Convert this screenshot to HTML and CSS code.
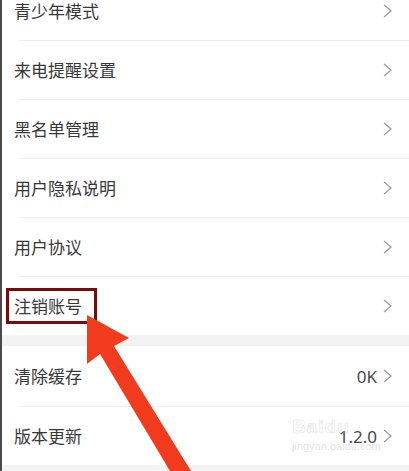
FILE: index.html
```html
<!DOCTYPE html>
<html lang="zh">
<head>
<meta charset="utf-8">
<link rel="stylesheet" href="styles.css">
</head>
<body>
<div class="screen">
  <div class="group first">
    <div class="item"><span class="label">青少年模式</span><span class="right"><svg class="chev" viewBox="0 0 9 14"><polyline points="1,1 8,7 1,13"/></svg></span></div>
    <div class="sep"></div>
    <div class="item"><span class="label">来电提醒设置</span><span class="right"><svg class="chev" viewBox="0 0 9 14"><polyline points="1,1 8,7 1,13"/></svg></span></div>
    <div class="sep"></div>
    <div class="item"><span class="label">黑名单管理</span><span class="right"><svg class="chev" viewBox="0 0 9 14"><polyline points="1,1 8,7 1,13"/></svg></span></div>
    <div class="sep"></div>
    <div class="item"><span class="label">用户隐私说明</span><span class="right"><svg class="chev" viewBox="0 0 9 14"><polyline points="1,1 8,7 1,13"/></svg></span></div>
    <div class="sep"></div>
    <div class="item"><span class="label">用户协议</span><span class="right"><svg class="chev" viewBox="0 0 9 14"><polyline points="1,1 8,7 1,13"/></svg></span></div>
    <div class="sep"></div>
    <div class="item"><span class="label boxed">注销账号</span><span class="right"><svg class="chev" viewBox="0 0 9 14"><polyline points="1,1 8,7 1,13"/></svg></span></div>
  </div>
  <div class="gap"></div>
  <div class="group">
    <div class="item tall"><span class="label">清除缓存</span><span class="right"><span class="value">0K</span><svg class="chev" viewBox="0 0 9 14"><polyline points="1,1 8,7 1,13"/></svg></span></div>
    <div class="sep"></div>
    <div class="item"><span class="label">版本更新</span><span class="right"><span class="value">1.2.0</span><svg class="chev" viewBox="0 0 9 14"><polyline points="1,1 8,7 1,13"/></svg></span></div>
  </div>
  <div class="gap bottom"></div>

  <div class="watermark">
    <span class="wm-logo">Bai<span class="wm-paw">du</span></span>
    <span class="wm-url">jingyan.baidu.com</span>
  </div>

  <svg class="arrow" viewBox="0 0 409 471" preserveAspectRatio="none">
    <polygon points="87,315 129,338 114,346 191,471 170,471 100,354 87,364"/>
  </svg>
</div>
</body>
</html>
```
FILE: styles.css
```css
html, body {
  margin: 0;
  padding: 0;
  background: #ffffff;
}

body {
  font-family: "Noto Sans CJK SC", "Noto Sans", sans-serif;
  color: #333333;
  width: 409px;
  height: 471px;
  overflow: hidden;
}

.screen {
  position: relative;
  width: 407px;
  height: 471px;
  overflow: hidden;
  border-left: 2px solid #4a4a4a;
  background: #ffffff;
}

.group.first {
  margin-top: -18px;
}

.item {
  height: 58px;
  display: flex;
  align-items: center;
  justify-content: space-between;
  padding: 0 17px 0 12px;
}

.item.tall {
  height: 60px;
}

.label {
  font-size: 17px;
  line-height: 24px;
  color: #383838;
}

.label.boxed {
  outline: 3px solid #7d0a0a;
  outline-offset: 0;
  padding: 3px 12px 3px 5px;
  margin-left: -5px;
}

.right {
  display: flex;
  align-items: center;
  gap: 6px;
}

.value {
  font-size: 17px;
  color: #484848;
  font-family: "Noto Sans", "Noto Sans CJK SC", sans-serif;
}

.chev {
  width: 9px;
  height: 14px;
  fill: none;
  stroke: #9a9a9a;
  stroke-width: 1.3;
}

.sep {
  height: 1px;
  margin-left: 17px;
  background: #eeeeee;
}

.gap {
  height: 11px;
  background: #f3f3f3;
}

.gap.bottom {
  height: 20px;
}

.watermark {
  position: absolute;
  left: 290px;
  top: 416px;
  display: flex;
  flex-direction: column;
  align-items: flex-start;
  pointer-events: none;
}

.wm-logo {
  font-family: "Liberation Sans", sans-serif;
  font-size: 19px;
  font-weight: bold;
  letter-spacing: 1px;
  -webkit-text-stroke: 0.6px rgba(180, 180, 180, 0.45);
  color: rgba(255, 255, 255, 0.2);
}

.wm-url {
  font-family: "Liberation Sans", sans-serif;
  font-size: 11px;
  margin-top: 2px;
  color: rgba(200, 200, 200, 0.5);
}

.arrow {
  position: absolute;
  left: -2px;
  top: 0;
  width: 409px;
  height: 471px;
  pointer-events: none;
}

.arrow polygon {
  fill: #f23a1d;
}
```
